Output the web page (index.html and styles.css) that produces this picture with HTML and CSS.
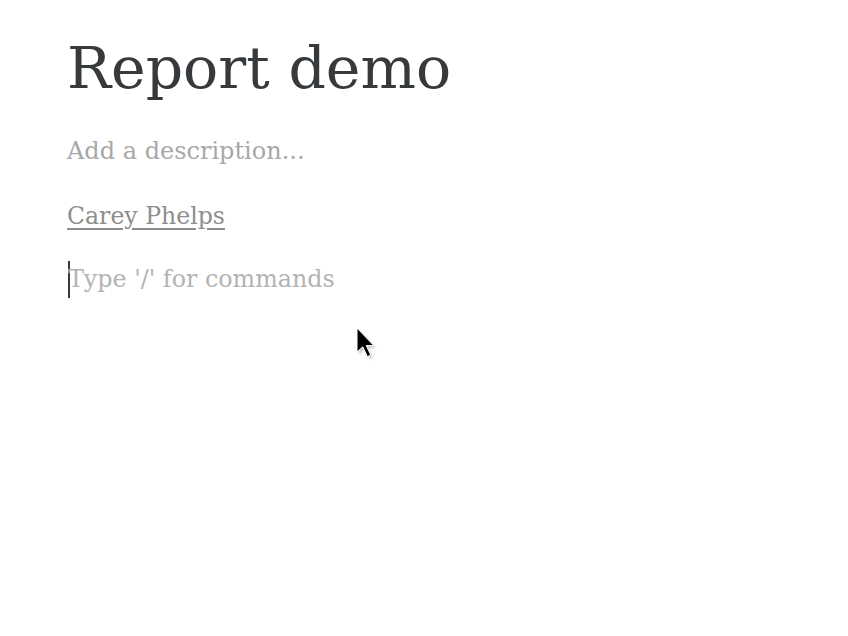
FILE: index.html
```html
<!DOCTYPE html>
<html lang="en">
<head>
<meta charset="utf-8">
<title>Report demo</title>
<link rel="stylesheet" href="styles.css">
</head>
<body>
<main class="page">
  <h1 class="title">Report demo</h1>
  <p class="description">Add a description...</p>
  <p class="author"><a href="#" class="author-link">Carey Phelps</a></p>
  <div class="editor"><span class="caret"></span><span class="placeholder">Type '/' for commands</span></div>
</main>
<svg class="cursor" width="28" height="38" viewBox="0 0 28 38" aria-hidden="true">
  <defs>
    <filter id="soft" x="-30%" y="-30%" width="160%" height="160%">
      <feGaussianBlur stdDeviation="1.2"/>
    </filter>
  </defs>
  <path d="M2 2 L2 26 L7.8 20.8 L12.4 30.6 L15.8 29 L11.2 19.6 L18.8 19.6 Z" fill="rgba(0,0,0,0.22)" transform="translate(2,2.5)" filter="url(#soft)"/>
  <path d="M2 2 L2 26 L7.8 20.8 L12.4 30.6 L15.8 29 L11.2 19.6 L18.8 19.6 Z" fill="#000" stroke="#fff" stroke-width="1" stroke-linejoin="round"/>
</svg>
</body>
</html>
```
FILE: styles.css
```css
html, body {
  margin: 0;
  padding: 0;
  background: #ffffff;
}
body {
  width: 848px;
  height: 636px;
  overflow: hidden;
  position: relative;
  font-family: "DejaVu Serif", "Liberation Serif", serif;
}
.page {
  padding: 28px 0 0 67px;
  display: flex;
  flex-direction: column;
}
.title {
  margin: 0;
  font-family: "DejaVu Serif", serif;
  font-weight: 400;
  font-size: 58.5px;
  line-height: 80px;
  color: #373a3c;
}
.description {
  margin: 28px 0 0 0;
  font-size: 24px;
  line-height: 30px;
  color: #a8a8a8;
}
.author {
  margin: 35px 0 0 0;
  font-size: 23.6px;
  line-height: 30px;
}
.author-link {
  color: #8e8e8e;
  text-decoration: underline;
  text-underline-offset: 4px;
}
.editor {
  margin-top: 29px;
  display: flex;
  align-items: center;
  height: 38px;
  font-size: 23.8px;
  color: #b3b3b3;
}
.caret {
  width: 2px;
  height: 37px;
  background: #373a3c;
  margin-left: 1px;
}
.placeholder {
  margin-left: -2px;
}
.cursor {
  position: absolute;
  left: 355px;
  top: 326px;
}
```
